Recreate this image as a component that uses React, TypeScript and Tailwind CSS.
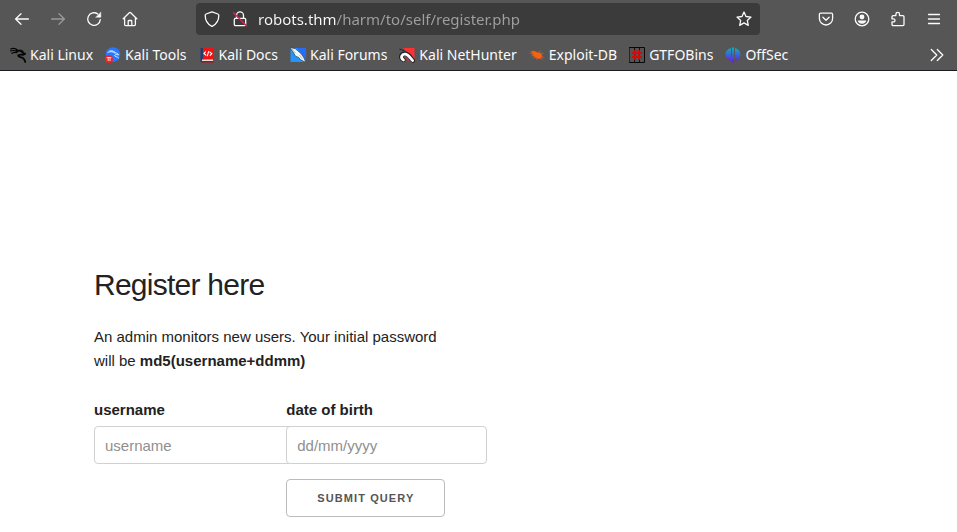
import { useState } from 'react';
import type { ReactNode } from 'react';

function Icon({ children }: { children: ReactNode }) {
  return (
    <svg
      viewBox="0 0 16 16"
      className="size-4 shrink-0"
      fill="none"
      stroke="currentColor"
      strokeWidth="1.3"
      strokeLinecap="round"
      strokeLinejoin="round"
      aria-hidden="true"
    >
      {children}
    </svg>
  );
}

const navButtons = [
  {
    label: 'Back',
    disabled: false,
    icon: <path d="M14.4 8H1.8M7 2.7 1.6 8 7 13.3" />,
  },
  {
    label: 'Forward',
    disabled: true,
    icon: <path d="M1.6 8h12.6M9 2.7 14.4 8 9 13.3" />,
  },
  {
    label: 'Reload',
    disabled: false,
    icon: (
      <>
        <path d="M11.8 3A6.3 6.3 0 1 0 14.3 8.6" />
        <path d="M14.8 1.4v4.8H10z" fill="currentColor" strokeWidth="0.5" />
      </>
    ),
  },
  {
    label: 'Home',
    disabled: false,
    icon: (
      <>
        <path d="M1.2 7.8 7.3 1.7a1 1 0 0 1 1.4 0l6.1 6.1M2.6 6.6v6.9c0 .6.5 1.1 1.1 1.1h8.6c.6 0 1.1-.5 1.1-1.1V6.6" />
        <path d="M6.2 14.4v-4.2c0-.4.3-.7.7-.7h2.2c.4 0 .7.3.7.7v4.2" />
      </>
    ),
  },
];

const menuButtons = [
  {
    label: 'Save to Pocket',
    icon: (
      <>
        <path d="M2.6 2.2h10.8c.7 0 1.2.5 1.2 1.2v4a6.6 6.6 0 0 1-13.2 0v-4c0-.7.5-1.2 1.2-1.2z" />
        <path d="M4.9 6.3 8 9.3l3.1-3" />
      </>
    ),
  },
  {
    label: 'Account',
    icon: (
      <>
        <circle cx="8" cy="8" r="6.8" />
        <circle cx="8" cy="6" r="2.4" fill="currentColor" stroke="none" />
        <path d="M3.8 9.6h8.4c0 1.9-1.9 3.2-4.2 3.2s-4.2-1.3-4.2-3.2z" fill="currentColor" stroke="none" />
      </>
    ),
  },
  {
    label: 'Extensions',
    icon: (
      <path d="M5.9 4.6V3.2a1.8 1.8 0 0 1 3.6 0v1.4h3.4c.6 0 1.1.5 1.1 1.1v7.8c0 .6-.5 1.1-1.1 1.1H3.1c-.6 0-1.1-.5-1.1-1.1v-2.6h1.5a1.5 1.5 0 0 0 0-3H2V5.7c0-.6.5-1.1 1.1-1.1z" />
    ),
  },
  {
    label: 'Menu',
    icon: <path d="M2.5 3.5h11M2.5 8h11M2.5 12.5h11" />,
  },
];

const bookmarks = [
  {
    name: 'Kali Linux',
    icon: (
      <g stroke="#050505">
        <path d="M.6 1.9C3.4.9 6 1.600 8 3.500M.4 4c2.500-1 5-.4 7.400.8M1.800 6.400c1.500-1.100 3.300-1.200 5-.8" strokeWidth="1.1" />
        <path d="M7 3.800c2.800-.6 4.900.2 5.600 1.900l2.500 1.200-1.900.9c-2.300-.3-4.800-.5-5 1-.1 1.300 2.800 1.100 4.800 2.200 1.300.8 1.700 2.100 2.300 4" strokeWidth="1.800" />
        <path d="m11 3 2.300 1.300" strokeWidth="0.9" />
      </g>
    ),
  },
  {
    name: 'Kali Tools',
    icon: (
      <>
        <circle cx="8" cy="7.500" r="7.300" fill="#2777ff" stroke="none" />
        <path d="M3 5.200c3-1.200 5.300-.5 7 .9M5 3.900c2.600-.4 4.500.5 5.700 2 1.600.2 2.300.8 3 2-2-.5-4.600-.3-4.100.9.400 1 3 .6 4.100 2.300" stroke="#d9f1ff" strokeWidth="1" />
        <circle cx="4" cy="12" r="3.900" fill="#ee2424" stroke="none" />
        <path d="M2 10.600h4M3.200 10.600v3M5 10.600v3" stroke="#fff" strokeWidth="0.8" />
      </>
    ),
  },
  {
    name: 'Kali Docs',
    icon: (
      <>
        <path d="M1.500 1h3v14h-3z" fill="#253b70" stroke="none" />
        <path d="M4 .5h10.500v12H4z" fill="#ed1414" stroke="none" />
        <path d="M3 12.500h11v1.600H3z" fill="#e9dede" stroke="none" />
        <path d="M2 14h12.500v1.500H2z" fill="#a90f1b" stroke="none" />
        <path d="M6.500 4.900 4.900 6.500l2 1.700M10.900 5.100l2 1.600-1.700 1.700M9.600 4.600 8.300 8.800" stroke="#fff" strokeWidth="1.1" />
      </>
    ),
  },
  {
    name: 'Kali Forums',
    icon: (
      <>
        <path d="M.5 1H16v14H.5z" fill="#2196ff" stroke="none" />
        <path d="M7 1h9v14z" fill="#246df4" stroke="none" />
        <path d="M0 .5 5.500 1.800 9 4.800l2.200 2 2.500 3.700 2.300 5-5.400-2.700-1.900-2.400-3.200-1.200-2.300-4z" fill="#f4f7f8" stroke="#26394c" strokeWidth="0.7" />
        <path d="m2 2 3.500 4M9.500 8l2.500 3.500" stroke="#8aa0ad" strokeWidth="0.6" />
      </>
    ),
  },
  {
    name: 'Kali NetHunter',
    icon: (
      <>
        <path d="M4 1h11.500v11z" fill="#ff3034" stroke="none" />
        <path d="M.8 2.200c2.200.4 4 1.300 5.400 2.500" stroke="#26222a" strokeWidth="1" />
        <path d="M4.500 13C.2 10.500 2.400 6.200 6.400 6.600c3.600.4 4.600 3.400 7.600 7" stroke="#23202a" strokeWidth="4.300" />
        <path d="M4.500 13C.8 10.400 2.800 6.700 6.500 7.100c3 .4 4.100 3.200 7.200 6.500" stroke="#fff" strokeWidth="2.700" />
        <path d="M6 10.800c1.600.2 2.800 1.400 4 2.800" stroke="#b8324b" strokeWidth="1.2" />
      </>
    ),
  },
  {
    name: 'Exploit-DB',
    icon: (
      <g stroke="#e9590c">
        <path d="M2 4.500c2.200-1 4.400-.5 6.100 1 2.900-.1 4.500 1.400 5 3.400l-1.300 2.500c-3 .8-6-.4-7.400-2.800z" fill="#f26314" strokeWidth="0.5" />
        <path d="m4 6-3 .3M5 8.500l-2.500.4M6.300 10l-1.900 1.200M8.500 10.800l-.7 1.600M9.600 5.300l1.900-.9M11.800 6.700l2.200-.5M12.800 9.500l2.200 1M11.700 11l1.800 1.800" strokeWidth="0.8" />
      </g>
    ),
  },
  {
    name: 'GTFOBins',
    icon: (
      <>
        <path d="M.5.5h15v15H.5z" fill="#565252" stroke="#080808" strokeWidth="1" strokeLinejoin="miter" />
        <path d="M5.500 1v14M10.500 1v14" stroke="#111" strokeWidth="1" />
        <path d="M6 3v10M10 3v10M3 6h10M3 10h10" stroke="#cf0b0b" strokeWidth="1.8" strokeLinecap="butt" />
      </>
    ),
  },
  {
    name: 'OffSec',
    icon: (
      <>
        <defs>
          <linearGradient id="offsec" gradientUnits="userSpaceOnUse" x1="0" y1="1" x2="0" y2="15">
            <stop offset="0" stopColor="#10aebb" />
            <stop offset="1" stopColor="#6a1be0" />
          </linearGradient>
        </defs>
        <path
          d="M6 1v13C2.600 13 .5 10.700.5 7.500S2.600 2 6 1zM7 .5h2v15H7zM10 1c3.400 1 5.500 3.300 5.500 6.500S13.400 13 10 14z"
          fill="url(#offsec)"
          stroke="none"
        />
      </>
    ),
  },
];

function Browser() {
  const [url, setUrl] = useState('robots.thm/harm/to/self/register.php');

  return (
    <header className="bg-[#565656] border-b border-[#1c1b22] text-[#fbfbfe] font-['Noto_Sans',sans-serif]">
      <div className="flex items-center h-[38px] pl-1 pr-[5px]">
        {navButtons.map((b) => (
          <button
            key={b.label}
            aria-label={b.label}
            disabled={b.disabled}
            className="w-9 h-8 flex items-center justify-center disabled:opacity-40"
          >
            <Icon>{b.icon}</Icon>
          </button>
        ))}

        <div className="flex-1 min-w-0 flex items-center h-8 mx-12 px-0.5 rounded bg-[#3b3b3b]">
          <button aria-label="Tracking protection" className="w-7 h-7 flex items-center justify-center">
            <Icon>
              <path d="M8 .9 13.9 3c.6.2.9.6.9 1.2 0 4.500-2.300 8.800-6.300 10.900-.3.200-.7.200-1 0C3.500 13 1.200 8.700 1.200 4.200c0-.6.3-1 .9-1.200z" />
            </Icon>
          </button>
          <button aria-label="Connection not secure" className="w-7 h-7 flex items-center justify-center">
            <Icon>
              <path d="M4.500 7.200V4.400a3.500 3.500 0 0 1 7 0v2.800M3.600 7.300h8.800c.8 0 1.300.5 1.300 1.300v4.700c0 .8-.5 1.300-1.300 1.300H3.600c-.8 0-1.300-.5-1.300-1.300V8.600c0-.8.5-1.300 1.300-1.300z" />
              <path d="m1.500 1.800 13 13" stroke="#e21f50" strokeWidth="1.4" />
            </Icon>
          </button>
          {/* host is bright, the path after it is dimmed */}
          <input
            aria-label="Address"
            value={url}
            onChange={(e) => setUrl(e.target.value)}
            className="flex-1 min-w-0 h-7 ml-1 text-[15px] outline-none text-transparent bg-clip-text bg-[linear-gradient(to_right,#fbfbfe_78px,#a0a0a0_78px)]"
          />
          <button aria-label="Bookmark this page" className="w-7 h-7 flex items-center justify-center">
            <Icon>
              <path d="m8 1 2 4.500 5 .6-3.700 3.300 1 5L8 11.900l-4.300 2.500 1-5L1 6.100l5-.6z" />
            </Icon>
          </button>
        </div>

        {menuButtons.map((b) => (
          <button key={b.label} aria-label={b.label} className="w-9 h-8 flex items-center justify-center">
            <Icon>{b.icon}</Icon>
          </button>
        ))}
      </div>

      <nav className="flex items-center h-8 px-1 pt-0.5 text-sm" aria-label="Bookmarks">
        {bookmarks.map((b) => (
          <a key={b.name} href="#" className="flex items-center gap-1 px-1.5 whitespace-nowrap">
            <Icon>{b.icon}</Icon>
            {b.name}
          </a>
        ))}
        <button aria-label="More bookmarks" className="ml-auto w-8 h-7 flex items-center justify-center">
          <Icon>
            <path d="m2.300 2.500 5.500 5.500-5.500 5.500M8.300 2.500l5.500 5.500-5.500 5.500" />
          </Icon>
        </button>
      </nav>
    </header>
  );
}

const inputClass =
  'relative bg-white block w-[201px] h-[38px] px-2.5 border border-[#d1d1d1] rounded outline-none placeholder:text-[#8f8f8f]';

export default function App() {
  return (
    <div className="min-h-screen bg-white">
      <Browser />

      <main className="mx-[94px] pt-[194px] text-[#222] font-['Liberation_Sans',sans-serif] text-[15px] leading-6">
        <h1 className="text-[30px] leading-10 tracking-tight mb-5">Register here</h1>
        <p className="max-w-[360px] mb-[25px]">
          An admin monitors new users. Your initial password will be <b>md5(username+ddmm)</b>
        </p>

        <form className="grid grid-cols-4 gap-y-[15px]" onSubmit={(e) => e.preventDefault()}>
          <div>
            <label htmlFor="username" className="block font-bold mb-1">
              username
            </label>
            <input id="username" name="username" type="text" placeholder="username" className={inputClass} />
          </div>
          <div>
            <label htmlFor="dob" className="block font-bold mb-1">
              date of birth
            </label>
            <input id="dob" name="dob" type="text" placeholder="dd/mm/yyyy" className={inputClass} />
          </div>
          <button
            type="submit"
            className="col-start-2 justify-self-start h-[38px] px-[30px] border border-[#bbb] rounded text-[11px] font-bold tracking-widest uppercase text-[#555] whitespace-nowrap"
          >
            Submit Query
          </button>
        </form>
      </main>
    </div>
  );
}
